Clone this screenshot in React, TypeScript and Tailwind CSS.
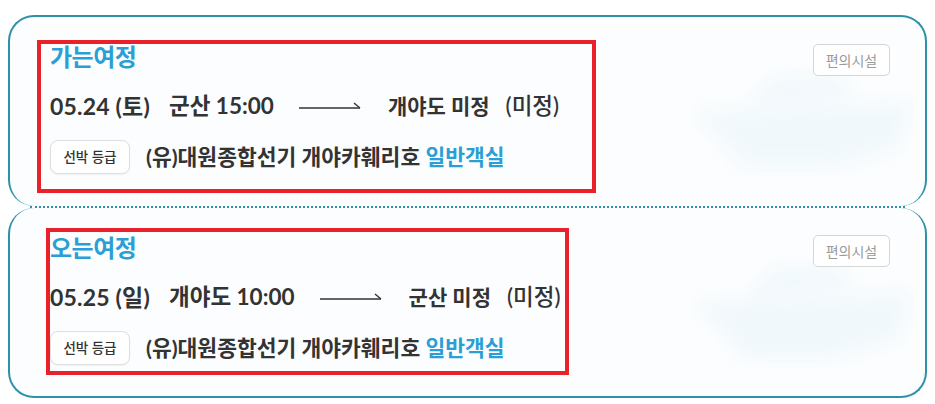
import React from "react";

const FONT = { fontFamily: "Lato, 'Noto Sans CJK KR', sans-serif" };

function Arrow() {
  return (
    <svg width="62" height="12" viewBox="0 0 62 12" className="ml-[25px] mr-[27px] shrink-0">
      <line x1="0" y1="8" x2="61" y2="8" stroke="#333" strokeWidth="1.6" />
      <line x1="55" y1="3" x2="61" y2="8" stroke="#333" strokeWidth="1.4" />
    </svg>
  );
}

function Ship() {
  return (
    <svg
      className="absolute right-[10px] top-[50px] pointer-events-none"
      width="230"
      height="110"
      viewBox="0 0 230 110"
    >
      <defs>
        <filter id="blur1">
          <feGaussianBlur stdDeviation="8" />
        </filter>
      </defs>
      <g filter="url(#blur1)" fill="#eff7fb" opacity="0.8">
        <path d="M10 45 L225 35 L215 80 L150 100 L60 100 Z" />
        <path d="M60 40 L90 10 L150 8 L170 30 Z" />
      </g>
    </svg>
  );
}

type Leg = {
  title: string;
  date: string;
  from: string;
  to: string;
};

function CardContent({ leg }: { leg: Leg }) {
  return (
    <div className="relative flex flex-col pl-[40px] pt-[25px]">
      <div className="text-[24px] leading-[30px] font-bold text-[#2b9fd5] tracking-[-0.5px]">
        {leg.title}
      </div>
      <div className="mt-[19px] flex items-center h-[30px] text-[21px] font-bold text-[#333]">
        <span className="text-[23px] tracking-[0.2px]">{leg.date}</span>
        <span className="ml-[19px] text-[22.5px]">{leg.from}</span>
        <Arrow />
        <span>{leg.to}</span>
        <span className="ml-[16px] text-[22.5px] font-medium text-[#333]">(미정)</span>
      </div>
      <div className="mt-[19px] flex items-center h-[34px]">
        <div className="h-[34px] w-[80px] flex items-center justify-center rounded-[8px] border border-[#dedede] bg-white text-[13.5px] font-medium text-[#333] shadow-[0_1px_2px_rgba(0,0,0,0.05)]">
          선박 등급
        </div>
        <div className="ml-[16px] text-[21.5px] font-bold text-[#333]">
          (유)대원종합선기 개야카훼리호 <span className="text-[#2b9fd5]">일반객실</span>
        </div>
      </div>
    </div>
  );
}

export default function App() {
  const go: Leg = {
    title: "가는여정",
    date: "05.24 (토)",
    from: "군산 15:00",
    to: "개야도 미정",
  };
  const back: Leg = {
    title: "오는여정",
    date: "05.25 (일)",
    from: "개야도 10:00",
    to: "군산 미정",
  };
  return (
    <div className="w-[935px] h-[404px] bg-white pt-[15px] px-[8px]" style={FONT}>
      <div className="w-[919px]">
        <div className="relative h-[191px] rounded-[26px] border-2 border-b-0 border-[#2d91a8] bg-[#fbfdfe] overflow-hidden">
          <Ship />
          <CardContent leg={go} />
          <div className="absolute right-[35px] top-[27px] h-[32px] w-[77px] flex items-center justify-center rounded-[5px] border border-[#d6d6d6] bg-white text-[14px] text-[#9a9a9a]">
            편의시설
          </div>
          <div className="absolute left-[27px] top-[23px] w-[559px] h-[153px] border-[4px] border-[#e8212b]" />
        </div>
        <div className="mx-[22px] border-t-2 border-dotted border-[#2d91a8]" />
        <div className="relative h-[190px] rounded-[26px] border-2 border-t-0 border-[#2d91a8] bg-[#fbfdfe] overflow-hidden">
          <Ship />
          <CardContent leg={back} />
          <div className="absolute right-[35px] top-[27px] h-[32px] w-[77px] flex items-center justify-center rounded-[5px] border border-[#d6d6d6] bg-white text-[14px] text-[#9a9a9a]">
            편의시설
          </div>
          <div className="absolute left-[36px] top-[20px] w-[523px] h-[147px] border-[4px] border-[#e8212b]" />
        </div>
      </div>
    </div>
  );
}
